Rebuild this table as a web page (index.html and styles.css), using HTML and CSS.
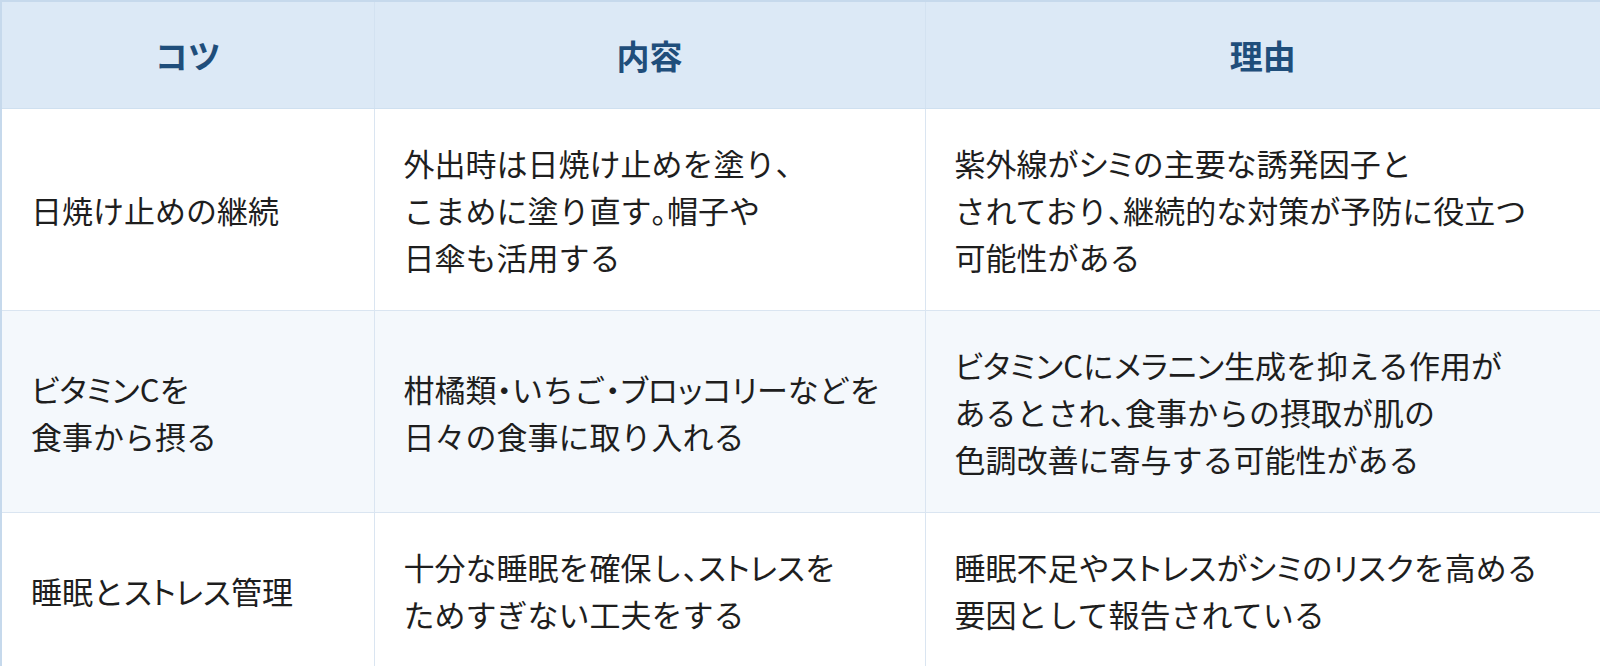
FILE: index.html
```html
<!DOCTYPE html>
<html lang="ja">
<head>
<meta charset="utf-8">
<link rel="stylesheet" href="styles.css">
</head>
<body>
<table class="tips">
  <colgroup>
    <col class="c1"><col class="c2"><col class="c3">
  </colgroup>
  <thead>
    <tr><th>コツ</th><th>内容</th><th>理由</th></tr>
  </thead>
  <tbody>
    <tr>
      <td>日焼け止めの継続</td>
      <td>外出時は日焼け止めを塗り<span class="p">、</span><br>こまめに塗り直す<span class="p">。</span>帽子や<br>日傘も活用する</td>
      <td>紫外線が<span class="k">シミ</span>の主要な誘発因子と<br>されており<span class="p">、</span>継続的な対策が予防に役立つ<br>可能性がある</td>
    </tr>
    <tr class="alt">
      <td><span class="k">ビタミン</span>Cを<br>食事から摂る</td>
      <td>柑橘類<span class="p">・</span>いちご<span class="p">・</span><span class="k">ブロッコリー</span>などを<br>日々の食事に取り入れる</td>
      <td><span class="k">ビタミン</span>Cに<span class="k">メラニン</span>生成を抑える作用が<br>あるとされ<span class="p">、</span>食事からの摂取が肌の<br>色調改善に寄与する可能性がある</td>
    </tr>
    <tr>
      <td>睡眠と<span class="k">ストレス</span>管理</td>
      <td>十分な睡眠を確保し<span class="p">、</span><span class="k">ストレス</span>を<br>ためすぎない工夫をする</td>
      <td>睡眠不足や<span class="k">ストレス</span>が<span class="k">シミ</span>の<span class="k">リスク</span>を高める<br>要因として報告されている</td>
    </tr>
  </tbody>
</table>
</body>
</html>
```
FILE: styles.css
```css
html, body {
  margin: 0;
  padding: 0;
  background: #ffffff;
}
body {
  font-family: "Noto Sans CJK JP", "Noto Sans", sans-serif;
  color: #1e1e1e;
}
.tips {
  width: 1600px;
  border-collapse: collapse;
  table-layout: fixed;
  border: 2px solid #c6d9ec;
}
.c1 { width: 373px; }
.c2 { width: 551px; }
.c3 { width: 676px; }
.tips th {
  background: #dce9f6;
  color: #1f4e7b;
  font-size: 33px;
  font-weight: 700;
  line-height: 50px;
  padding: 28px 32px;
  text-align: center;
  border: 1px solid #d3e2f1;
  border-bottom-color: #cfe0f0;
}
.tips td {
  font-size: 31px;
  line-height: 47px;
  padding: 30px 30px 30px 29px;
  vertical-align: middle;
  text-align: left;
  border: 1px solid #dae5f1;
  white-space: nowrap;
}
.tips td .p {
  font-feature-settings: "halt";
}
.tips td .k {
  font-feature-settings: "palt";
}
.tips tr.alt td {
  background: #f4f8fc;
}
```
